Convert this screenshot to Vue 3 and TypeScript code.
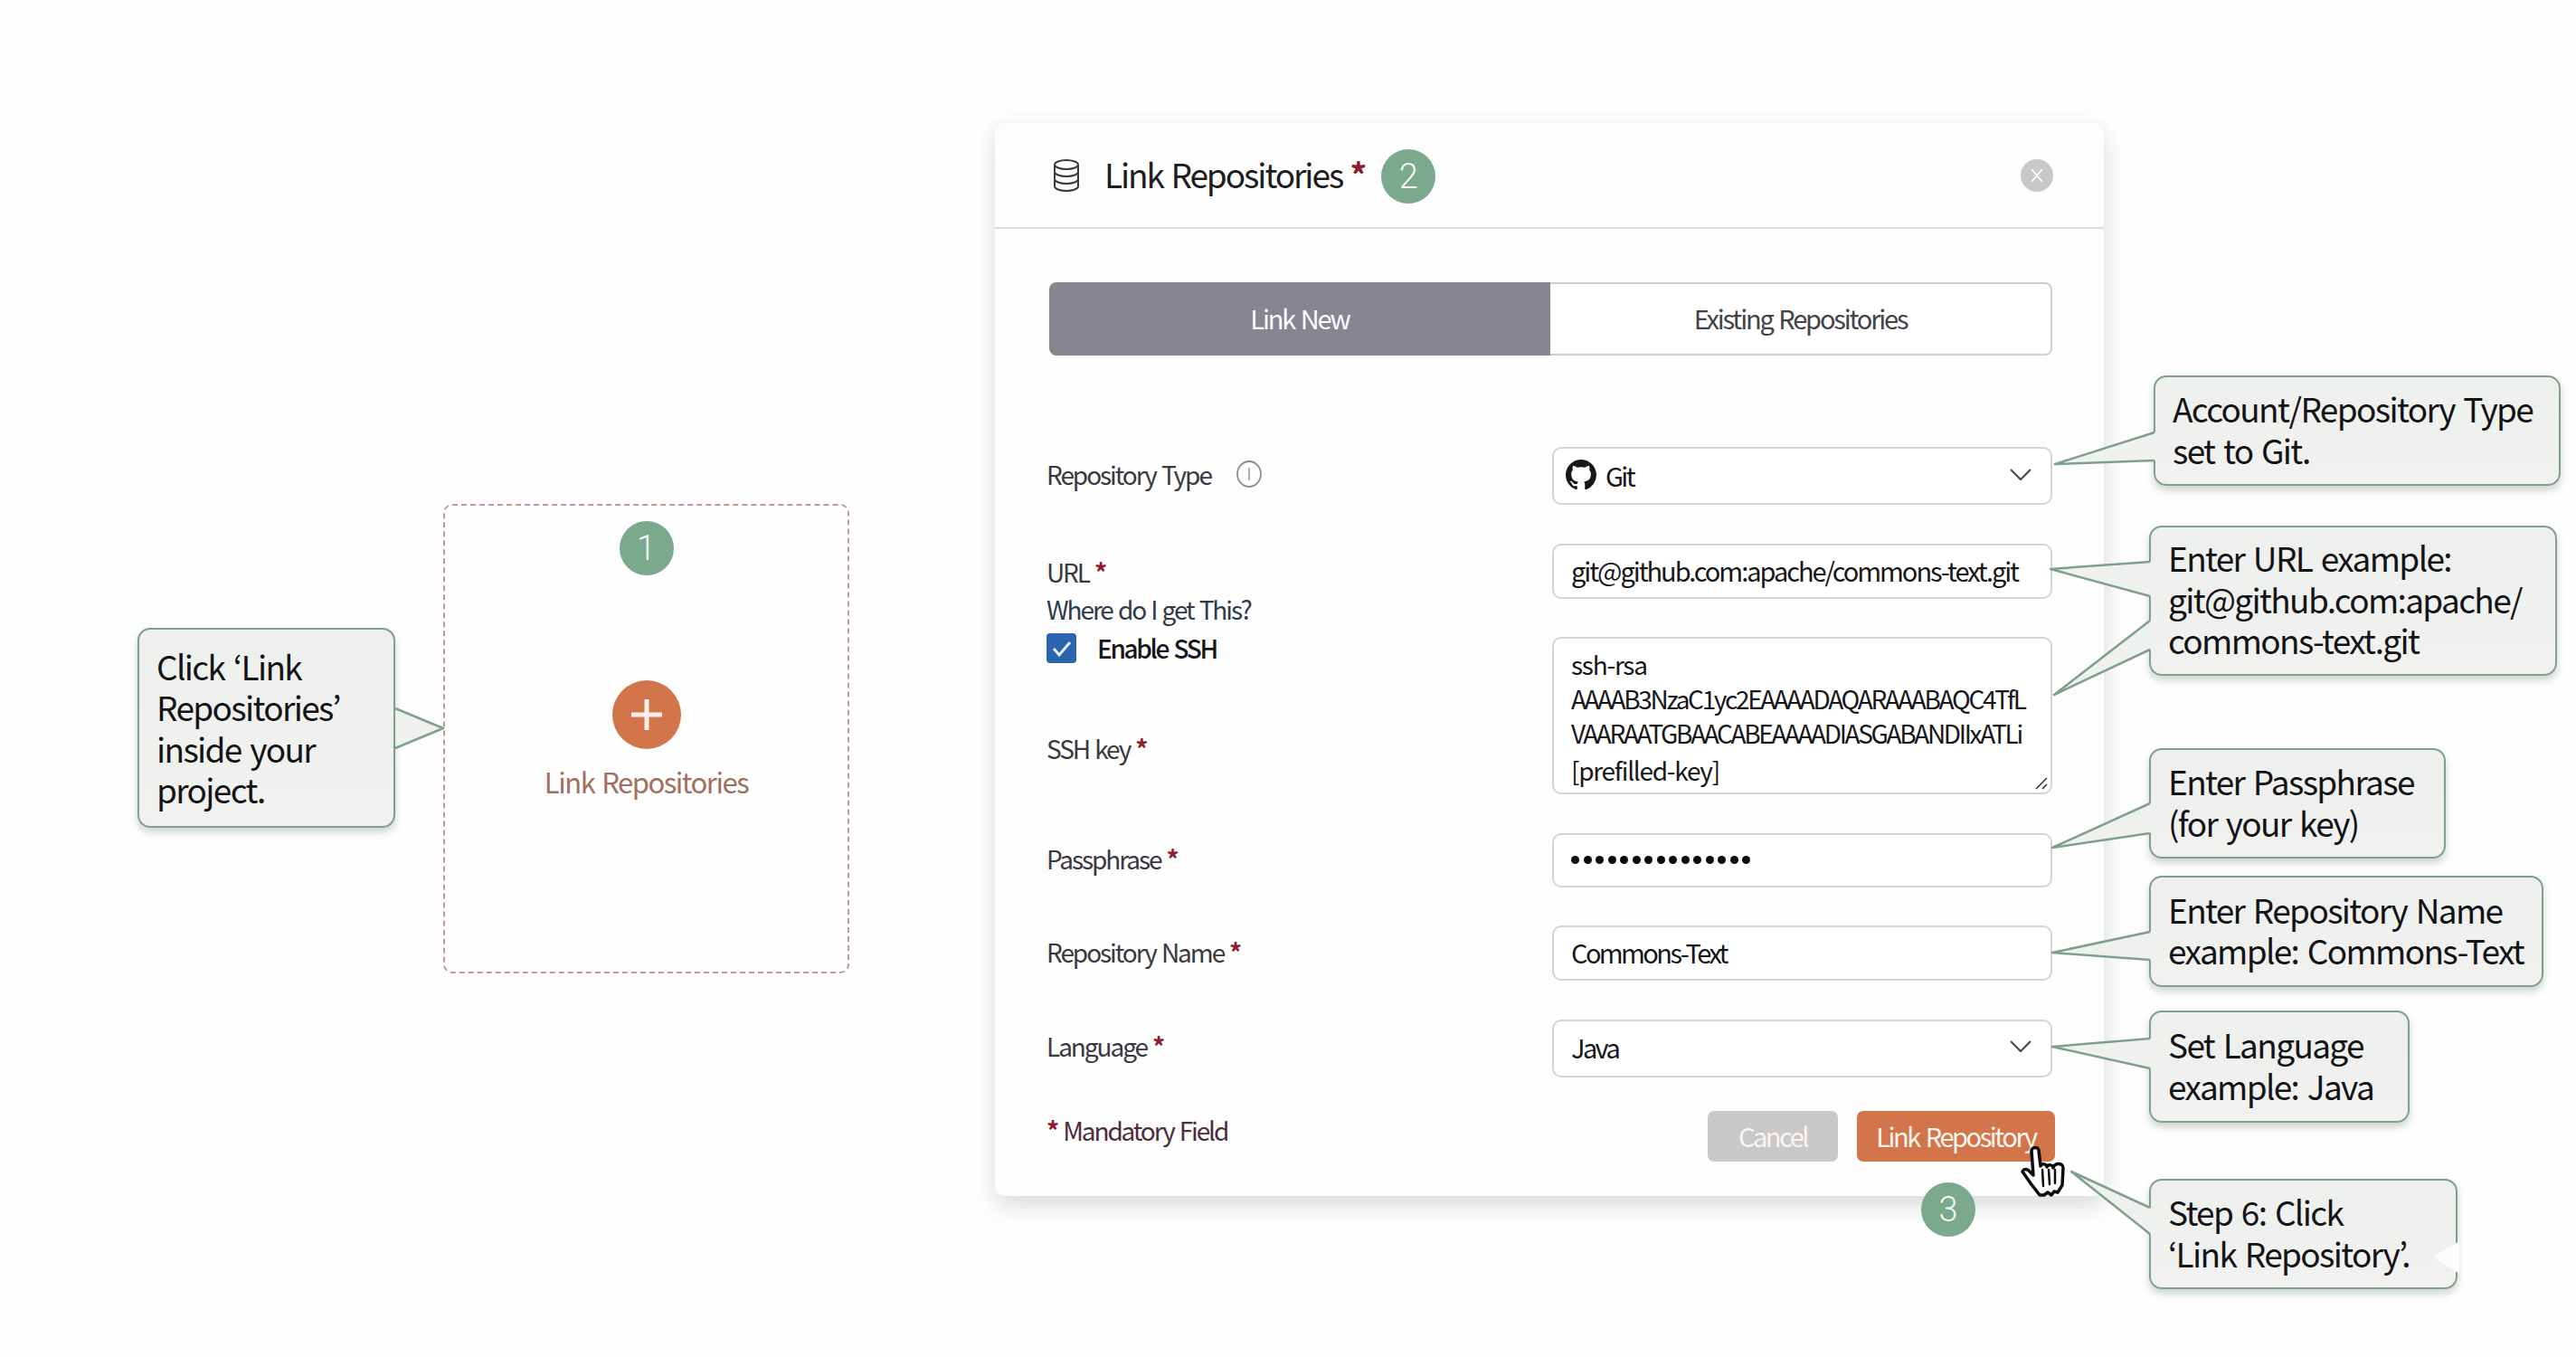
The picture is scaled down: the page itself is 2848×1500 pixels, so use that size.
<script setup lang="ts">
interface Callout {
  left: number
  top: number
  width: number
  height: number
  lines: string[]
}

const callouts: Callout[] = [
  { left: 152, top: 694, width: 285, height: 221, lines: ['Click ‘Link', 'Repositories’', 'inside your', 'project.'] },
  { left: 2381, top: 415, width: 450, height: 122, lines: ['Account/Repository Type', 'set to Git.'] },
  { left: 2376, top: 581, width: 451, height: 166, lines: ['Enter URL example:', 'git@github.com:apache/', 'commons-text.git'] },
  { left: 2376, top: 827, width: 328, height: 122, lines: ['Enter Passphrase', '(for your key)'] },
  { left: 2376, top: 968, width: 436, height: 123, lines: ['Enter Repository Name', 'example: Commons-Text'] },
  { left: 2376, top: 1117, width: 288, height: 124, lines: ['Set Language', 'example: Java'] },
  { left: 2376, top: 1303, width: 341, height: 122, lines: ['Step 6: Click', '‘Link Repository’.'] },
]

// base, tip, base
const tails: number[][][] = [
  [[437, 783], [490, 805], [437, 827]],
  [[2382, 478], [2272, 513], [2382, 509]],
  [[2377, 621], [2267, 629], [2377, 659]],
  [[2377, 686], [2271, 768], [2377, 718]],
  [[2377, 888], [2269, 937], [2377, 921]],
  [[2377, 1030], [2269, 1053], [2377, 1061]],
  [[2377, 1148], [2269, 1157], [2377, 1181]],
  [[2377, 1335], [2290, 1295], [2377, 1364]],
]

const pts = (t: number[][]) => t.map((p) => p.join(',')).join(' ')
const fillPts = (t: number[][]) => `${t[0][0] + 3},${t[0][1]} ${pts(t)} ${t[2][0] + 3},${t[2][1]}`

const keyLines = [
  { text: 'ssh-rsa', caps: false },
  { text: 'AAAAB3NzaC1yc2EAAAADAQARAAABAQC4TfL', caps: true },
  { text: 'VAARAATGBAACABEAAAADIASGABANDIIxATLi', caps: true },
  { text: '[prefilled-key]', caps: false },
]
</script>

<template>
  <div class="page">
    <div class="add-card">
      <span class="step">1</span>
      <span class="plus">
        <svg width="40" height="40" viewBox="0 0 40 40"><path d="M20 3v34M3 20h34" stroke="#fbeee6" stroke-width="5" /></svg>
      </span>
      <span class="add-label">Link Repositories</span>
    </div>

    <section class="modal">
      <header class="modal-head">
        <svg class="db-icon" width="30" height="36" viewBox="0 0 30 36" fill="none" stroke="#3b3b3f" stroke-width="2">
          <ellipse cx="15" cy="6" rx="13" ry="5" />
          <path d="M2 6v24c0 2.8 5.8 5 13 5s13-2.2 13-5V6" />
          <path d="M2 14c0 2.800 5.800 5 13 5s13-2.200 13-5" />
          <path d="M2 22c0 2.800 5.800 5 13 5s13-2.200 13-5" />
        </svg>
        <h2 class="modal-title">Link Repositories <span class="star">*</span></h2>
        <span class="step">2</span>
        <span class="close">
          <svg width="18" height="18" viewBox="0 0 18 18"><path d="M3 2l12 14M15 2L3 16" stroke="#fff" stroke-width="1.800" /></svg>
        </span>
      </header>

      <div class="modal-body">
        <div class="tabs">
          <div class="tab active">Link New</div>
          <div class="tab">Existing Repositories</div>
        </div>

        <div class="form">
          <div class="label type-label">
            Repository Type
            <svg class="info" width="28" height="30" viewBox="0 0 28 30" fill="none" stroke="#8b8d8e" stroke-width="1.800">
              <ellipse cx="14" cy="15" rx="13" ry="14" />
              <path d="M14 8v14" stroke-width="1.400" />
            </svg>
          </div>
          <div class="field select">
            <span class="select-value">
              <svg width="34" height="34" viewBox="0 0 16 16" fill="#17171a">
                <path d="M8 0C3.580 0 0 3.580 0 8c0 3.540 2.290 6.530 5.470 7.590.4.070.55-.17.55-.38 0-.19-.01-.82-.01-1.490-2.010.37-2.530-.49-2.690-.94-.09-.23-.48-.94-.82-1.130-.28-.15-.68-.52-.01-.53.63-.01 1.080.58 1.230.82.72 1.210 1.870.87 2.330.66.070-.52.28-.87.51-1.070-1.780-.2-3.640-.89-3.640-3.950 0-.87.31-1.590.82-2.150-.08-.2-.36-1.020.08-2.120 0 0 .67-.21 2.200.82.64-.18 1.320-.27 2-.27.68 0 1.360.09 2 .27 1.530-1.040 2.200-.82 2.200-.82.44 1.100.16 1.920.08 2.120.51.56.82 1.270.82 2.150 0 3.070-1.870 3.750-3.650 3.950.29.25.54.73.54 1.480 0 1.070-.01 1.930-.01 2.200 0 .21.15.46.55.38A8.013 8.013 0 0016 8c0-4.420-3.580-8-8-8z" />
              </svg>
              Git
            </span>
            <svg class="chev" width="24" height="14" viewBox="0 0 24 14" fill="none" stroke="#45474b" stroke-width="2"><path d="M1 1l11 11L23 1" /></svg>
          </div>

          <div class="url-group">
            <div class="label url-label">URL <span class="star">*</span></div>
            <div class="label where">Where do I get This?</div>
            <div class="check-row">
              <span class="check">
                <svg width="24" height="20" viewBox="0 0 24 20" fill="none" stroke="#e3edf9" stroke-width="3"><path d="M3 10l6 7L21 3" /></svg>
              </span>
              <span class="check-text">Enable SSH</span>
            </div>
            <div class="label ssh-label">SSH key <span class="star">*</span></div>
          </div>
          <div class="field url">git@github.com:apache/commons-text.git</div>
          <div class="field key">
            <div v-for="line in keyLines" :key="line.text" :class="{ caps: line.caps }">{{ line.text }}</div>
            <svg class="grip" width="14" height="14" viewBox="0 0 14 14" stroke="#333" stroke-width="1.500"><path d="M1 13L13 1M8 13l5-5" /></svg>
          </div>

          <div class="label">Passphrase <span class="star">*</span></div>
          <div class="field dots">
            <i v-for="n in 15" :key="n" />
          </div>

          <div class="label">Repository Name <span class="star">*</span></div>
          <div class="field plain">Commons-Text</div>

          <div class="label lang-label">Language <span class="star">*</span></div>
          <div class="field select">
            <span class="select-value">Java</span>
            <svg class="chev" width="24" height="14" viewBox="0 0 24 14" fill="none" stroke="#45474b" stroke-width="2"><path d="M1 1l11 11L23 1" /></svg>
          </div>
        </div>

        <footer class="modal-foot">
          <span class="mandatory"><span class="star">*</span> Mandatory Field</span>
          <div class="actions">
            <button type="button" class="btn cancel">Cancel</button>
            <button type="button" class="btn primary">Link Repository</button>
          </div>
        </footer>
      </div>

      <span class="step step-3">3</span>
      <svg class="hand" width="50" height="56" viewBox="0 0 50 56" fill="#fff" stroke="#0b0b0b" stroke-width="3.500" stroke-linejoin="round" stroke-linecap="round">
        <path d="M14 32L12 5c0-4 8-5 8 0l2 17c1-3 7-3 7 1 1-3 7-3 7 1 1-6 11-6 11 0l-1 19-5 8-4-1-3 4-4-3-4 3-5 0-10-13L2 28c1-3 5-3 7-1z" />
        <path d="M24 26l1 18M31 26l1 16M38 26l0 15" stroke-width="2.500" />
      </svg>
    </section>

    <div
      v-for="c in callouts"
      :key="c.lines[0]"
      class="callout"
      :class="{ tall: c.lines.length > 3 }"
      :style="{ left: c.left + 'px', top: c.top + 'px', width: c.width + 'px', height: c.height + 'px' }"
    >
      <div v-for="line in c.lines" :key="line">{{ line }}</div>
    </div>

    <svg class="tails" width="2848" height="1500" viewBox="0 0 2848 1500">
      <g v-for="(t, i) in tails" :key="i">
        <polygon :points="fillPts(t)" fill="#eff1ef" />
        <polyline :points="pts(t)" fill="none" stroke="#7fa08c" stroke-width="2.500" stroke-linejoin="round" />
      </g>
      <polygon points="2719,1372 2690,1389 2719,1408" fill="#fbfcfb" />
    </svg>
  </div>
</template>

<style>
html,
body {
  background: #fefefe;
}
</style>

<style scoped>
.page {
  position: relative;
  width: 2848px;
  height: 1500px;
  overflow: hidden;
  background: #fefefe;
  font-family: 'Noto Sans CJK KR', 'Noto Sans', sans-serif;
  color: #2e2e33;
}

.step {
  display: grid;
  flex: none;
  width: 60px;
  height: 60px;
  place-items: center;
  border-radius: 50%;
  background: #7aa98d;
  color: #f4f8f5;
  font-family: Roboto, sans-serif;
  font-size: 38px;
  font-weight: 300;
  line-height: 1;
}

.add-card {
  position: absolute;
  top: 557px;
  left: 490px;
  display: flex;
  box-sizing: border-box;
  width: 449px;
  height: 519px;
  flex-direction: column;
  align-items: center;
  padding-top: 17px;
  border: 2px dashed #c09a90;
  border-radius: 10px;
}

.plus {
  display: grid;
  width: 76px;
  height: 76px;
  place-items: center;
  margin-top: 116px;
  border-radius: 50%;
  background: #d2754a;
}

.add-label {
  margin-top: 14px;
  color: #a0705e;
  font-size: 31px;
  line-height: 44px;
  letter-spacing: -0.048em;
  word-spacing: 0.08em;
}

.modal {
  position: absolute;
  top: 136px;
  left: 1100px;
  box-sizing: border-box;
  width: 1226px;
  height: 1186px;
  border-radius: 12px;
  background: #fdfdfd;
  box-shadow:
    0 14px 26px rgb(60 70 70 / 14%),
    0 0 24px rgb(60 70 70 / 6%);
}

.modal-head {
  display: flex;
  box-sizing: border-box;
  height: 117px;
  align-items: center;
  padding: 0 56px 0 64px;
  border-bottom: 2px solid #d9dbdd;
}

.db-icon {
  flex: none;
  margin-right: 27px;
}

.modal-title {
  margin: -3px 18px 0 0;
  color: #1d1d21;
  font-size: 37px;
  font-weight: 400;
  line-height: 50px;
  letter-spacing: -0.056em;
  word-spacing: 0.06em;
}

.modal-head .step {
  margin-top: 3px;
}

.close {
  display: grid;
  width: 36px;
  height: 36px;
  place-items: center;
  margin-left: auto;
  border-radius: 50%;
  background: #c8c8c8;
}

.star {
  color: #8c1c30;
  font-weight: 700;
}

.modal-body {
  padding: 59px 57px 0 57px;
}

.tabs {
  display: grid;
  height: 81px;
  grid-template-columns: 554px 555px;
  margin-left: 3px;
}

.tab {
  display: grid;
  place-items: center;
  padding-bottom: 3px;
  border: 2px solid #cbced4;
  border-left: 0;
  border-radius: 0 8px 8px 0;
  background: #fff;
  color: #434347;
  font-size: 29px;
  letter-spacing: -0.075em;
  word-spacing: 0.08em;
}

.tab.active {
  border: 0;
  border-radius: 8px 0 0 8px;
  background: #868590;
  color: #fbfbfd;
}

.form {
  display: grid;
  grid-template-columns: 559px 553px;
  row-gap: 42.500px;
  align-items: center;
  margin-top: 101px;
}

.label {
  display: flex;
  align-items: center;
  gap: 6px;
  margin-top: -3px;
  color: #3c3840;
  font-size: 28px;
  line-height: 36px;
  letter-spacing: -0.074em;
  word-spacing: 0.07em;
}

.type-label {
  margin-top: -4px;
}

.lang-label {
  margin-top: -5px;
}

.info {
  margin-left: 22px;
}

.url-group {
  display: flex;
  flex-direction: column;
  align-self: start;
  grid-row: 2 / span 2;
  padding-top: 13px;
}

.url-label {
  margin-top: 0;
}

.where {
  margin-top: 5px;
  color: #2f3a4a;
}

.check-row {
  display: flex;
  align-items: center;
  margin-top: 9px;
}

.check {
  display: grid;
  width: 33px;
  height: 33px;
  place-items: center;
  border-radius: 4px;
  background: #2a66ad;
}

.check-text {
  margin-top: -2px;
  margin-left: 23px;
  color: #17171a;
  font-size: 28px;
  font-weight: 500;
  line-height: 36px;
  letter-spacing: -0.085em;
  word-spacing: 0.1em;
}

.ssh-label {
  margin-top: 75px;
}

.field {
  position: relative;
  display: flex;
  box-sizing: border-box;
  align-items: center;
  padding: 0 19px 3px;
  border: 2px solid #d2d4d8;
  border-radius: 10px;
  background: #fff;
  color: #17171a;
  font-size: 29px;
  letter-spacing: -0.09em;
  white-space: nowrap;
}

.select {
  height: 64px;
  justify-content: space-between;
}

.select-value {
  display: flex;
  align-items: center;
  gap: 10px;
}

.select-value svg {
  margin-left: -6px;
}

.chev {
  margin-right: 2px;
}

.url {
  height: 61px;
  grid-column: 2;
  letter-spacing: -0.071em;
}

.key {
  display: block;
  height: 174px;
  grid-column: 2;
  padding-top: 9px;
  overflow: hidden;
  font-size: 28px;
  line-height: 38px;
  letter-spacing: -0.045em;
}

.key .caps {
  letter-spacing: -0.083em;
}

.key .caps + div:not(.caps) {
  margin-top: 3px;
}

.grip {
  position: absolute;
  right: 3px;
  bottom: 3px;
}

.dots {
  height: 60px;
  gap: 4.500px;
  padding-bottom: 0;
}

.dots i {
  width: 9px;
  height: 9px;
  border-radius: 50%;
  background: #0b0b0b;
}

.plain {
  height: 61px;
}

.modal-foot {
  display: flex;
  align-items: center;
  justify-content: space-between;
  margin-top: 37.500px;
}

.mandatory {
  margin-top: -14px;
  color: #4c2c40;
  font-size: 28px;
  line-height: 36px;
  letter-spacing: -0.076em;
  word-spacing: 0.07em;
}

.actions {
  display: flex;
  gap: 21px;
  margin-right: -3px;
}

.btn {
  height: 56px;
  padding: 0 0 3px;
  border: 0;
  border-radius: 7px;
  color: #fbf4ee;
  font-family: inherit;
  font-size: 29px;
  letter-spacing: -0.085em;
  word-spacing: 0.1em;
}

.cancel {
  width: 144px;
  background: #c8c8c8;
}

.primary {
  width: 219px;
  background: #d2754a;
}

.step-3 {
  position: absolute;
  top: 1171px;
  left: 1024px;
}

.hand {
  position: absolute;
  top: 1131px;
  left: 1134px;
}

.callout {
  position: absolute;
  display: flex;
  box-sizing: border-box;
  flex-direction: column;
  justify-content: center;
  padding-bottom: 3px;
  padding-left: 19px;
  border: 2.500px solid #7fa08c;
  border-radius: 14px;
  background: linear-gradient(180deg, #eef0ee, #f1f2f0);
  box-shadow: 0 5px 8px rgb(90 120 100 / 30%);
  color: #141416;
  font-size: 37px;
  line-height: 45.500px;
  letter-spacing: -0.045em;
  word-spacing: 0.08em;
  white-space: nowrap;
}

.callout.tall {
  padding-bottom: 0;
}

.tails {
  position: absolute;
  top: 0;
  left: 0;
  pointer-events: none;
}
</style>
